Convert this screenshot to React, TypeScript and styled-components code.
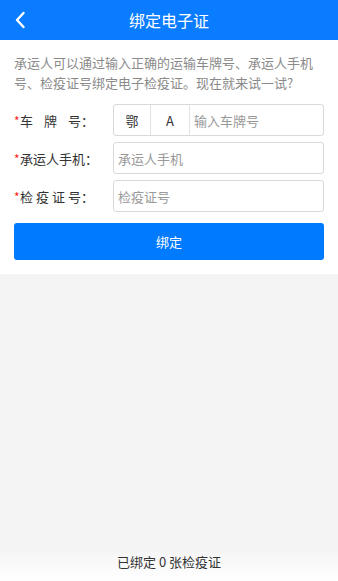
import React from 'react'
import styled, { createGlobalStyle } from 'styled-components'

const GlobalStyle = createGlobalStyle`
  html, body {
    margin: 0;
    padding: 0;
    height: 100%;
    background: #f4f4f4;
  }
  body {
    font-family: "Noto Sans CJK SC", "Noto Sans", sans-serif;
  }
  #root {
    min-height: 100%;
  }
  * {
    box-sizing: border-box;
  }
`

const Page = styled.div`
  display: flex;
  flex-direction: column;
  height: 581px;
  background: #f4f4f4;
`

const Header = styled.div`
  position: relative;
  display: flex;
  align-items: center;
  justify-content: center;
  height: 40px;
  background: #0a7cff;
  color: #fff;
  font-size: 16px;
`

const Back = styled.div`
  position: absolute;
  left: 14px;
  top: 11px;
  width: 16px;
  height: 18px;
  display: flex;
  align-items: center;
`

const Panel = styled.div`
  background: #fff;
  padding: 13px 14px 14px;
`

const Intro = styled.p`
  margin: 0 0 11px;
  font-size: 13px;
  line-height: 20px;
  color: #8a8a8a;
`

const Row = styled.div`
  display: flex;
  align-items: center;
  height: 32px;
  margin-bottom: 6px;
`

const Label = styled.div`
  width: 99px;
  font-size: 13px;
  color: #333;
  display: flex;
  align-items: center;
`

const Star = styled.span`
  width: 6px;
  font-size: 12px;
  line-height: 1;
  color: #ff1a1a;
  margin-top: 1px;
`

const Spread = styled.span`
  flex: 0 0 auto;
  width: 74px;
  display: flex;
  justify-content: space-between;
`

const Field = styled.div`
  flex: 1;
  height: 32px;
  display: flex;
  border: 1px solid #d9d9d9;
  border-radius: 3px;
  overflow: hidden;
`

const Cell = styled.div<{ $w: number }>`
  width: ${({ $w }) => $w}px;
  display: flex;
  align-items: center;
  justify-content: center;
  border-right: 1px solid #e2e2e2;
  font-size: 13px;
  color: #333;
`

const Placeholder = styled.div`
  flex: 1;
  display: flex;
  align-items: center;
  padding-left: 4px;
  font-size: 13px;
  color: #999;
`

const Button = styled.div`
  margin-top: 11px;
  height: 37px;
  display: flex;
  align-items: center;
  justify-content: center;
  background: #007aff;
  border-radius: 3px;
  color: #fff;
  font-size: 13px;
`

const Spacer = styled.div`
  flex: 1;
`

const Footer = styled.div`
  height: 33px;
  display: flex;
  align-items: center;
  justify-content: center;
  font-size: 13px;
  color: #333;
  padding-bottom: 6px;
  background: linear-gradient(to bottom, #f4f4f4, #ffffff);
`

const Spaced = ({ chars }: { chars: string[] }) => (
  <Spread>
    {chars.map((c, i) => (
      <span key={i}>{c}</span>
    ))}
  </Spread>
)

export default function App() {
  return (
    <Page>
      <GlobalStyle />
      <Header>
        <Back>
          <svg width="12" height="18" viewBox="0 0 12 18">
            <path d="M9.5 2 L3 9 L9.5 16" fill="none" stroke="#fff" strokeWidth="2.4" strokeLinecap="round" strokeLinejoin="round" />
          </svg>
        </Back>
        绑定电子证
      </Header>
      <Panel>
        <Intro>承运人可以通过输入正确的运输车牌号、承运人手机号、检疫证号绑定电子检疫证。现在就来试一试?</Intro>
        <Row>
          <Label>
            <Star>*</Star>
            <Spaced chars={['车', '牌', '号：']} />
          </Label>
          <Field>
            <Cell $w={37}>鄂</Cell>
            <Cell $w={39}>A</Cell>
            <Placeholder>输入车牌号</Placeholder>
          </Field>
        </Row>
        <Row>
          <Label>
            <Star>*</Star>
            <span>承运人手机：</span>
          </Label>
          <Field>
            <Placeholder>承运人手机</Placeholder>
          </Field>
        </Row>
        <Row>
          <Label>
            <Star>*</Star>
            <Spaced chars={['检', '疫', '证', '号：']} />
          </Label>
          <Field>
            <Placeholder>检疫证号</Placeholder>
          </Field>
        </Row>
        <Button>绑定</Button>
      </Panel>
      <Spacer />
      <Footer>已绑定 0 张检疫证</Footer>
    </Page>
  )
}
